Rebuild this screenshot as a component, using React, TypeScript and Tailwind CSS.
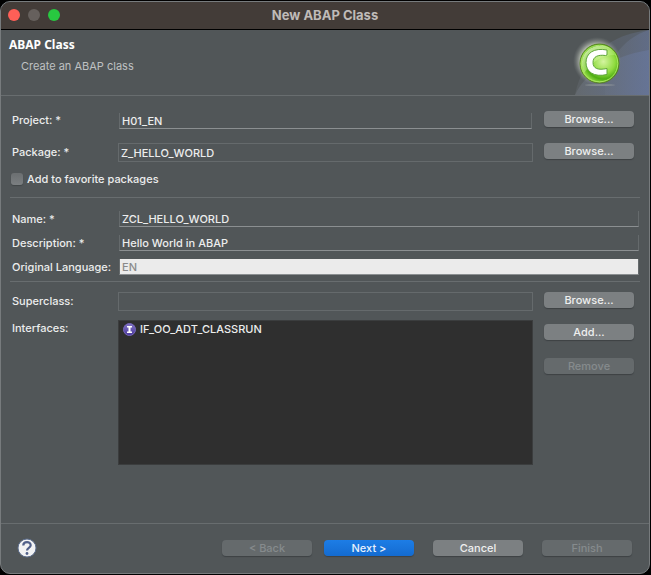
import { useState } from "react";
import type { ButtonHTMLAttributes, InputHTMLAttributes, ReactNode } from "react";

function PushButton({ primary, className = "", ...rest }: ButtonHTMLAttributes<HTMLButtonElement> & { primary?: boolean }) {
  const tone = primary
    ? "bg-linear-to-b from-[#1d7de6] to-[#146bd0] text-[#e8f1fc]"
    : rest.disabled
      ? "bg-[#656a6c] text-[#868b8d]"
      : "bg-[#7c8082] text-[#eeefef]";
  return (
    <button
      type="button"
      className={`h-4 w-[90px] shrink-0 rounded-[4px] text-center leading-4 shadow-[0_1px_1px_#3d4244] ${tone} ${className}`}
      {...rest}
    />
  );
}

function Field({ boxed, className = "", ...rest }: InputHTMLAttributes<HTMLInputElement> & { boxed?: boolean }) {
  const frame = boxed
    ? "h-[19px] border border-[#656a6c] px-0.5"
    : "mx-px h-4 border border-t-0 border-x-[#656a6c] border-b-[#8b8f91] px-0.5 pt-0.5";
  return (
    <input
      type="text"
      className={`min-w-0 self-end rounded-none outline-none disabled:bg-[#ebebeb] disabled:text-[#8a8a8a] ${frame} ${className}`}
      {...rest}
    />
  );
}

function Label({ htmlFor, tall, children }: { htmlFor: string; tall?: boolean; children: ReactNode }) {
  return (
    <label htmlFor={htmlFor} className={`whitespace-nowrap ${tall ? "leading-[18px]" : "leading-4"}`}>
      {children}
    </label>
  );
}

function ClassBanner() {
  return (
    <svg width="81" height="65" viewBox="0 0 81 65" aria-hidden="true" className="shrink-0">
      <defs>
        <linearGradient id="sweep" x1="0" x2="1">
          <stop offset="0" stopColor="#686e74" />
          <stop offset="1" stopColor="#68779c" />
        </linearGradient>
        <radialGradient id="glow">
          <stop offset="0.7" stopColor="#e4ead8" stopOpacity="0.65" />
          <stop offset="1" stopColor="#8a9090" stopOpacity="0" />
        </radialGradient>
        <radialGradient id="ball" cx="0.6" cy="0.45" r="0.6">
          <stop offset="0" stopColor="#d4f4a0" />
          <stop offset="0.5" stopColor="#8fdb3e" />
          <stop offset="0.75" stopColor="#4fae12" />
          <stop offset="1" stopColor="#a4e552" />
        </radialGradient>
        <linearGradient id="shine" x1="0" x2="0.8" y1="0" y2="1">
          <stop offset="0" stopColor="#f2ffd8" stopOpacity="0.9" />
          <stop offset="1" stopColor="#b8ee70" stopOpacity="0.1" />
        </linearGradient>
      </defs>
      <path d="M7 65C12 40 25 24 40 14C52 6 66 2 81 0V65Z" fill="url(#sweep)" fillOpacity="0.35" />
      <path d="M37 65C35 35 54 8 81 0V65Z" fill="url(#sweep)" fillOpacity="0.5" />
      <path d="M7 65C16 45 40 27 81 20V65Z" fill="url(#sweep)" fillOpacity="0.7" />
      <ellipse cx="32" cy="55" rx="15" ry="1" fill="#a0a5a5" opacity="0.5" />
      <circle cx="29" cy="31" r="24" fill="url(#glow)" />
      <circle cx="31.5" cy="33.500" r="19.500" fill="url(#ball)" stroke="#557e20" />
      <circle cx="31.5" cy="33.500" r="18.300" fill="none" stroke="#a9e75e" />
      <path d="M14 36C13 22 24 14 36 16C42 17 45 21 47 25C34 25 25 31 16 43Z" fill="url(#shine)" />
      <path
        d="M39 20C26 17.500 18 23 18 32.500C18 42 26 47.500 39 44.500V38.500C30 40.500 25 38.500 25 32.500C25 26.500 30 24.500 37.500 25.500L39 25Z"
        fill="#fff"
        stroke="#5fa53a"
      />
    </svg>
  );
}

function InterfaceIcon() {
  return (
    <svg width="13" height="13" viewBox="0 0 13 13" aria-hidden="true" className="shrink-0">
      <defs>
        <linearGradient id="iface" x2="0" y2="1">
          <stop offset="0" stopColor="#8173c3" />
          <stop offset="1" stopColor="#4a379c" />
        </linearGradient>
      </defs>
      <circle cx="6.500" cy="6.500" r="6" fill="url(#iface)" stroke="#7566b8" />
      <path d="M4 3H9V4.500H7.500V8.500H9V10H4V8.500H5.500V4.500H4Z" fill="#fff" />
    </svg>
  );
}

function HelpIcon() {
  return (
    <svg width="20" height="20" viewBox="0 0 20 20" aria-hidden="true">
      <circle cx="10" cy="10" r="9" fill="#f1f2f3" stroke="#5d6e8e" />
      <path d="M6.300 7.500C6.300 3 13.700 3 13.700 7.300C13.700 10 10 9.800 10 12.500" fill="none" stroke="#51618a" strokeWidth="2.200" />
      <circle cx="10" cy="15.500" r="1.400" fill="#51618a" />
    </svg>
  );
}

export default function App() {
  const [name, setName] = useState("ZCL_HELLO_WORLD");
  const [description, setDescription] = useState("Hello World in ABAP");
  const [project, setProject] = useState("H01_EN");
  const [pkg, setPkg] = useState("Z_HELLO_WORLD");
  const [superclass, setSuperclass] = useState("");

  return (
    <div className="min-h-screen bg-black pt-px pr-px pb-px font-[Inter,sans-serif] text-[11px] font-medium text-[#eceded]">
      <div className="flex min-h-[calc(100vh-2px)] flex-col overflow-hidden rounded-[10px] border border-[#777b7d] bg-[#515658]">
        <div className="grid h-7 shrink-0 grid-cols-[1fr_auto_1fr] items-center border-b border-black bg-[#433c38] px-[7px] pb-px">
          <div className="flex gap-2">
            <button type="button" aria-label="Close" className="size-3 rounded-full bg-[#ff5f57]" />
            <button type="button" aria-label="Minimize" disabled className="size-3 rounded-full bg-[#66605d]" />
            <button type="button" aria-label="Zoom" className="size-3 rounded-full bg-[#28c840]" />
          </div>
          <h1 className="text-[13px] leading-4 font-bold text-[#bfbbb8]">New ABAP Class</h1>
        </div>

        <header className="flex h-[66px] shrink-0 justify-between border-b border-[#686d6f]">
          <div className="pt-[7px] pl-2">
            <h2 className="font-['Noto_Sans',sans-serif] text-[12px] leading-4 font-bold text-white">ABAP Class</h2>
            <p className="pt-[5px] pl-3 text-[11px] leading-4 font-normal text-[#bfc1c2]">Create an ABAP class</p>
          </div>
          <ClassBanner />
        </header>

        <main className="flex flex-1 flex-col">
          <section className="grid grid-cols-[106px_minmax(0,1fr)_90px] gap-y-3.5 pt-[15px] pr-[15px] pb-3 pl-[11px]">
            <Label htmlFor="project" tall>Project: *</Label>
            <div className="flex pt-0.5 pr-[11px]">
              <Field id="project" className="flex-1" value={project} onChange={(e) => setProject(e.target.value)} />
            </div>
            <PushButton>Browse...</PushButton>
            <Label htmlFor="package" tall>Package: *</Label>
            <div className="flex pr-[11px]">
              <Field id="package" boxed className="flex-1" value={pkg} onChange={(e) => setPkg(e.target.value)} />
            </div>
            <PushButton>Browse...</PushButton>
            <label className="col-span-3 -mt-1 -ml-px flex h-[14px] items-center gap-1">
              <input type="checkbox" className="size-3 appearance-none rounded-[3px] bg-linear-to-b from-[#6b6f71] to-[#7b7f81] shadow-[0_1px_1px_#414648] checked:bg-[#1d7de6]" />
              Add to favorite packages
            </label>
          </section>

          <hr className="-mt-px mr-[9px] ml-[9px] border-[#686d6f]" />

          <section className="grid grid-cols-[106px_minmax(0,1fr)] gap-y-2 pt-[13px] pr-[9px] pb-1.5 pl-[11px]">
            <Label htmlFor="name">Name: *</Label>
            <Field id="name" value={name} onChange={(e) => setName(e.target.value)} />
            <Label htmlFor="description">Description: *</Label>
            <Field id="description" value={description} onChange={(e) => setDescription(e.target.value)} />
            <Label htmlFor="language">Original Language:</Label>
            <Field id="language" value="EN" disabled />
          </section>

          <hr className="mr-[9px] ml-[9px] border-[#686d6f]" />

          <section className="grid grid-cols-[106px_minmax(0,1fr)_90px] gap-y-[9px] pt-2.5 pr-[15px] pl-[11px]">
            <Label htmlFor="superclass" tall>Superclass:</Label>
            <div className="flex pr-[11px]">
              <Field id="superclass" boxed className="flex-1" value={superclass} onChange={(e) => setSuperclass(e.target.value)} />
            </div>
            <PushButton>Browse...</PushButton>
            <span id="interfaces" className="leading-4">Interfaces:</span>
            <div className="pr-[11px]">
              <ul aria-labelledby="interfaces" className="h-[145px] border border-[#3b3d3e] bg-[#2f2f2f]">
                <li className="flex h-4 items-center gap-1 px-1">
                  <InterfaceIcon />
                  IF_OO_ADT_CLASSRUN
                </li>
              </ul>
            </div>
            <div className="flex flex-col gap-[18px] pt-1">
              <PushButton>Add...</PushButton>
              <PushButton disabled>Remove</PushButton>
            </div>
          </section>
        </main>

        <footer className="flex h-[50px] shrink-0 items-center justify-between border-t border-[#686d6f] pr-[17px] pb-0.5 pl-4">
          <button type="button" aria-label="Help">
            <HelpIcon />
          </button>
          <div className="flex gap-[19px]">
            <div className="flex gap-3">
              <PushButton disabled>&lt; Back</PushButton>
              <PushButton primary>Next &gt;</PushButton>
            </div>
            <PushButton>Cancel</PushButton>
            <PushButton disabled>Finish</PushButton>
          </div>
        </footer>
      </div>
    </div>
  );
}
